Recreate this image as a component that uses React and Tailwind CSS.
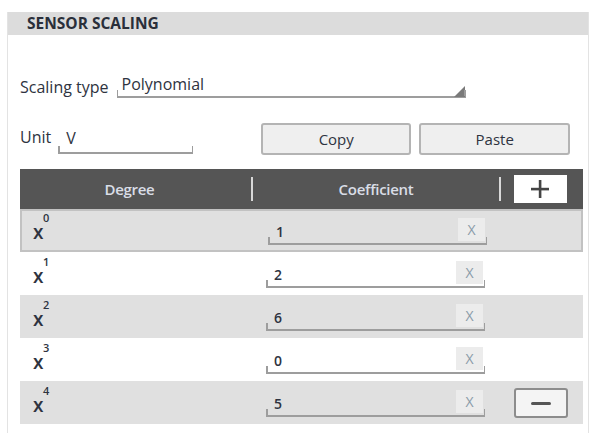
import React from "react";

const rows = [
  { d: 0, v: "1", bg: "bg-[#e0e0e0]", sel: true },
  { d: 1, v: "2", bg: "bg-white" },
  { d: 2, v: "6", bg: "bg-[#e0e0e0]" },
  { d: 3, v: "0", bg: "bg-white" },
  { d: 4, v: "5", bg: "bg-[#e0e0e0]", minus: true },
];

function Field({ className = "", children }) {
  return (
    <div
      className={`relative flex items-end border-b-2 border-[#9d9d9d] before:absolute before:bottom-0 before:left-0 before:h-[6px] before:w-[1.5px] before:bg-[#9d9d9d] after:absolute after:bottom-0 after:right-0 after:h-[6px] after:w-[1.5px] after:bg-[#9d9d9d] ${className}`}
    >
      {children}
    </div>
  );
}

function Row({ r }) {
  return (
    <div
      className={`flex h-[43px] items-stretch ${r.bg} ${
        r.sel ? "border-2 border-[#c2c2c2]" : ""
      }`}
    >
      <div className={`flex w-[232px] items-center ${r.sel ? "pl-[11px] pt-[3px]" : "pl-[13px] pt-[5px]"}`}>
        <span className="relative text-[19px] leading-none font-semibold text-[#2e3340]">
          x
          <span className="absolute left-[10px] top-[-11px] text-[11px] leading-none font-semibold">{r.d}</span>
        </span>
      </div>
      <div className={`flex flex-1 items-end ${r.sel ? "pb-[5px]" : "pb-[7px]"}`}>
        <Field className="ml-[14px] h-[26px] w-[219px] justify-between">
          <span className="mb-[1px] pl-[8px] text-[14px] font-semibold text-[#2e3340]">{r.v}</span>
          <span className="mb-[2px] mr-[2px] flex h-[23px] w-[27px] items-center justify-center bg-[#ececec] text-[14px] text-[#8a9aa8]">
            X
          </span>
        </Field>
        <div className="flex flex-1 justify-end pr-[15px]">
          {r.minus && (
            <div className="mb-[-1px] flex h-[30px] w-[54px] items-center justify-center rounded-[3px] border-2 border-[#8c8c8c] bg-[#f4f4f4]">
              <div className="h-[3px] w-[20px] rounded bg-[#555]" />
            </div>
          )}
        </div>
      </div>
    </div>
  );
}

export default function App() {
  return (
    <div
      className="h-[445px] w-[594px] bg-white pl-[7px] pt-[12px]"
      style={{ fontFamily: '"Open Sans", "Noto Sans", sans-serif' }}
    >
      <div className="h-[421px] w-[582px] border-l border-r border-[#e3e3e3]">
        <div className="flex h-[23px] items-center bg-[#dcdcdc] pl-[19px] text-[15.5px] font-bold text-[#2a2f3a]">
          SENSOR SCALING
        </div>
        <div className="pl-[12px] pr-[5px]">
          {/* Scaling type */}
          <div className="mt-[39px] flex h-[24px] items-end">
            <span className="mb-[3px] text-[16px] font-medium leading-none text-[#2e3340]">Scaling type</span>
            <Field className="ml-[8px] h-[22px] w-[349px]">
              <span className="mb-[4px] pl-[5px] text-[16px] font-medium leading-none text-[#2e3340]">Polynomial</span>
              <svg className="absolute bottom-[-1px] right-[0px]" width="12" height="11" viewBox="0 0 12 11">
                <polygon points="11,0 11,11 0,11" fill="#7a7a7a" />
              </svg>
            </Field>
          </div>
          {/* Unit row */}
          <div className="mt-[25px] flex h-[32px] items-end">
            <div className="flex h-full items-end pb-[1px]">
              <span className="mb-[9px] text-[16px] font-medium leading-none text-[#2e3340]">Unit</span>
              <Field className="ml-[7px] h-[22px] w-[135px]">
                <span className="mb-[6px] pl-[8px] text-[16px] font-medium leading-none text-[#2e3340]">V</span>
              </Field>
            </div>
            <div className="ml-[68px] flex gap-[8px]">
              <button className="flex h-[32px] w-[150px] items-center justify-center rounded-[3px] border-2 border-[#b4b4b4] bg-[#efefef] text-[15px] font-medium text-[#2e3340]">
                Copy
              </button>
              <button className="flex h-[32px] w-[151px] items-center justify-center rounded-[3px] border-2 border-[#b4b4b4] bg-[#efefef] text-[15px] font-medium text-[#2e3340]">
                Paste
              </button>
            </div>
          </div>
          {/* Table */}
          <div className="mt-[14px] w-[563px]">
            <div className="flex h-[40px] items-center bg-[#555555] text-[15px] font-semibold tracking-[-0.3px] text-[#d9dde6]">
              <div className="flex w-[231px] justify-center pr-[12px]">Degree</div>
              <div className="h-[24px] w-[2px] bg-[#d8d8d8]" />
              <div className="flex w-[246px] justify-center">Coefficient</div>
              <div className="h-[24px] w-[2px] bg-[#d8d8d8]" />
              <div className="flex flex-1 justify-center pr-[4px]">
                <div className="flex h-[28px] w-[53px] items-center justify-center bg-white">
                  <svg width="20" height="20" viewBox="0 0 20 20">
                    <rect x="8.8" y="1" width="2.6" height="18" fill="#444" />
                    <rect x="1" y="8.8" width="18" height="2.6" fill="#444" />
                  </svg>
                </div>
              </div>
            </div>
            {rows.map((r) => (
              <Row key={r.d} r={r} />
            ))}
          </div>
        </div>
      </div>
    </div>
  );
}
